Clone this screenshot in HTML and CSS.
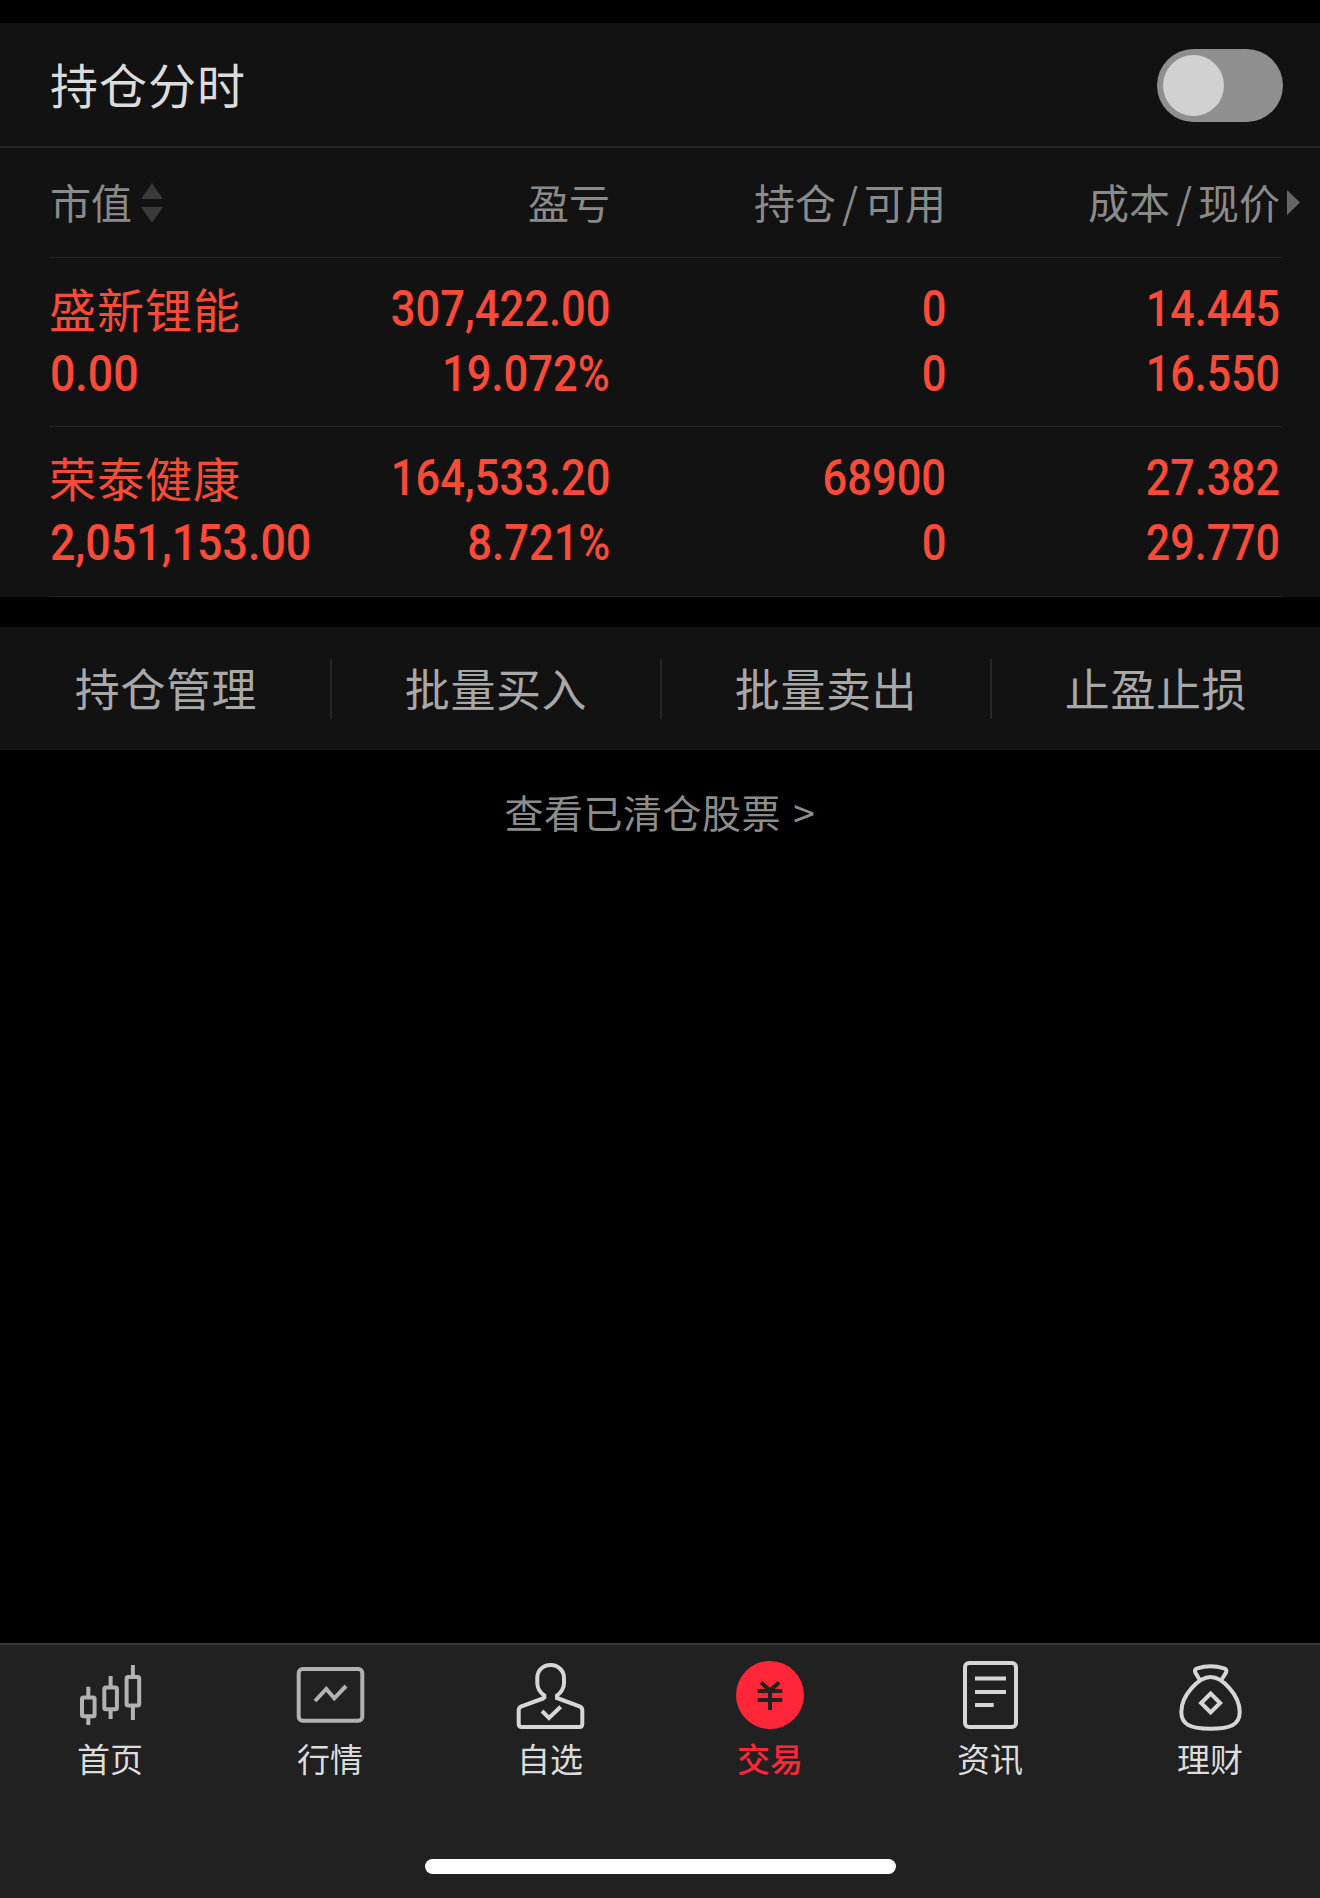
FILE: index.html
```html
<!DOCTYPE html>
<html lang="zh-CN">
<head>
  <meta charset="UTF-8">
  <meta name="viewport" content="width=device-width, initial-scale=1.0">
  <title>交易</title>
  <link rel="stylesheet" href="styles.css">
</head>
<body>
  <main>
    <section class="panel">
      <div class="panel-title">
        <h1>持仓分时</h1>
        <div class="switch"><div class="knob"></div></div>
      </div>

      <div class="table">
        <div class="row head">
          <div class="cell">市值
            <svg class="sort" width="22" height="40" viewBox="0 0 22 40"><path d="M11 0L22 16H0ZM11 40L0 24H22Z"/></svg>
          </div>
          <div class="cell">盈亏</div>
          <div class="cell">持仓<i>/</i>可用</div>
          <div class="cell">成本<i>/</i>现价
            <svg class="more" width="13" height="25" viewBox="0 0 13 25"><path d="M0 0L13 12.5L0 25Z"/></svg>
          </div>
        </div>
        <div class="row">
          <div class="cell"><b class="name">盛新锂能</b><span>0.00</span></div>
          <div class="cell"><span>307,422.00</span><span>19.072%</span></div>
          <div class="cell"><span>0</span><span>0</span></div>
          <div class="cell"><span>14.445</span><span>16.550</span></div>
        </div>
        <div class="row">
          <div class="cell"><b class="name">荣泰健康</b><span>2,051,153.00</span></div>
          <div class="cell"><span>164,533.20</span><span>8.721%</span></div>
          <div class="cell"><span>68900</span><span>0</span></div>
          <div class="cell"><span>27.382</span><span>29.770</span></div>
        </div>
      </div>
    </section>

    <section class="actions">
      <div>持仓管理</div>
      <div>批量买入</div>
      <div>批量卖出</div>
      <div>止盈止损</div>
    </section>

    <a class="cleared">查看已清仓股票 &gt;</a>
  </main>

  <footer>
    <nav>
      <a class="tab dim">
        <svg viewBox="0 0 68 68">
          <rect x="6" y="36.6" width="12.6" height="18.6" rx="1.5"/>
          <rect x="28.3" y="26.6" width="12.6" height="21.6" rx="1.5"/>
          <rect x="50.6" y="16" width="12.6" height="28.4" rx="1.5"/>
          <path d="M12.3 25.7V36M12.3 56V64M34.6 15V26M34.6 49V58M56.9 4V15M56.9 45V59"/>
        </svg>
        首页
      </a>
      <a class="tab dim">
        <svg viewBox="0 0 68 68">
          <rect x="2.7" y="8" width="63.6" height="51.8" rx="4"/>
          <path d="M19 40L30.3 28L38.3 37.3L50 25"/>
        </svg>
        行情
      </a>
      <a class="tab">
        <svg viewBox="0 0 68 68">
          <path d="M28.3 38V34.5C24 31.5 21.5 28 21.3 22.5V17C21.3 9.5 27 4 34.6 4S48 9.5 48 17V22.5C47.8 28 45 31.5 41 34.5V37L63.5 45.3Q66.3 46.5 66.3 49V63Q66.3 66 63.3 66H5.7Q2.7 66 2.7 63V49Q2.7 46.5 5.5 45.3L28.3 37"/>
          <path d="M26 50L33 57L44.7 45.7"/>
        </svg>
        自选
      </a>
      <a class="tab active">
        <svg viewBox="0 0 68 68">
          <circle cx="34" cy="34" r="34"/>
          <path d="M25 21.5L34 29.5L43 21.5M21.7 30H46.3M21.7 39H46.3M34 29V49"/>
        </svg>
        交易
      </a>
      <a class="tab">
        <svg viewBox="0 0 68 68">
          <rect x="9" y="2" width="51" height="64" rx="4"/>
          <path d="M19 17.5H50M19 31H50M19 44H37.7"/>
        </svg>
        资讯
      </a>
      <a class="tab">
        <svg viewBox="0 0 68 68">
          <path d="M34.6 16C46 16 63.7 34 63.7 51C63.7 64 54 67.7 34.6 67.7S5.3 64 5.3 51C5.3 34 23 16 34.6 16Z"/>
          <path d="M23.5 18.5L19.3 11.5Q18 8.5 21.3 7.3Q34.6 3 48 7.3Q51.3 8.5 50 11.5L45.7 18.5"/>
          <path d="M34.6 32.5L44.1 42L34.6 51.5L25.1 42Z"/>
        </svg>
        理财
      </a>
    </nav>
    <div class="home-bar"></div>
  </footer>
</body>
</html>
```

FILE: styles.css
```css
* {
  box-sizing: border-box;
}

body {
  margin: 0;
  height: 1898px;
  padding-top: 23px;
  display: flex;
  flex-direction: column;
  background: #000;
  font-family: "Noto Sans CJK SC", sans-serif;
  font-weight: 400;
}

main {
  flex: 1;
}

.panel,
.actions {
  background: #121212;
}

.panel-title {
  display: flex;
  justify-content: space-between;
  align-items: flex-start;
  height: 125px;
  padding: 26px 37px 0 50px;
  border-bottom: 2px solid #272727;
}

h1 {
  margin: 0;
  font-size: 48px;
  font-weight: 400;
  letter-spacing: 1px;
  line-height: 68px;
  color: #dcdcdc;
}

.switch {
  width: 126px;
  height: 73px;
  padding: 6px;
  border-radius: 37px;
  background: #8f8f8f;
}

.knob {
  width: 61px;
  height: 61px;
  border-radius: 50%;
  background: #d1d1d1;
}

.table {
  padding: 0 37px 0 49px;
}

.row {
  display: grid;
  grid-template-columns: 226px 335px 336px 334px;
  height: 169px;
  padding: 18px 3px 0 0;
  border-bottom: 1px solid #242424;
  color: #fa4a38;
}

.row + .row {
  height: 170px;
}

.row.head + .row {
  height: 169px;
}

.cell {
  display: flex;
  flex-direction: column;
  align-items: flex-end;
}

.cell:first-child {
  align-items: flex-start;
}

.cell span {
  font-family: Roboto, sans-serif;
  font-size: 50px;
  font-weight: 500;
  line-height: 65px;
  padding-top: 1px;
  margin-bottom: -1px;
  white-space: nowrap;
  transform: scaleX(0.87);
  transform-origin: right;
}

.cell:first-child span {
  padding-left: 1px;
  transform: scaleX(0.895);
  transform-origin: left;
}

.cell:last-child span {
  transform: scaleX(0.86);
}

.name {
  font-size: 47px;
  font-weight: 400;
  letter-spacing: 1px;
  line-height: 63px;
  margin-bottom: 2px;
}

.row.head {
  height: 110px;
  padding-top: 0;
  color: #8a8a8a;
  font-size: 41px;
}

.head .cell {
  position: relative;
  flex-direction: row;
  align-items: center;
  justify-content: flex-end;
  padding-bottom: 3px;
}

.head .cell:first-child {
  justify-content: flex-start;
  padding-left: 1px;
}

.head i {
  font-style: normal;
  padding: 0 6px;
}

.sort {
  margin-left: 9px;
  margin-top: 3px;
  fill: #3a3a3a;
}

/* sits in the right gutter, outside the column */
.more {
  position: absolute;
  right: -20px;
  margin-top: 3px;
  fill: #666;
}

.actions {
  display: flex;
  align-items: center;
  height: 123px;
  margin-top: 30px;
}

.actions div {
  flex: 1;
  height: 60px;
  line-height: 58px;
  text-align: center;
  font-size: 45px;
  letter-spacing: 0.6px;
  color: #a8a8a8;
}

.actions div:first-child {
  padding-left: 2px;
}

.actions div + div {
  border-left: 2px solid #262626;
}

.cleared {
  display: block;
  margin-top: 31px;
  line-height: 60px;
  text-align: center;
  font-size: 39px;
  letter-spacing: 0.5px;
  word-spacing: 3px;
  color: #8c8c8c;
}

footer {
  height: 255px;
  border-top: 2px solid #373737;
  background: #212121;
}

nav {
  display: flex;
  padding-top: 16px;
}

.tab {
  flex: 1;
  display: flex;
  flex-direction: column;
  align-items: center;
  font-size: 33px;
  line-height: 48px;
  color: #dcdcdc;
}

.tab svg {
  width: 68px;
  height: 68px;
  margin-bottom: 5px;
  overflow: visible;
  fill: none;
  stroke: #d6d6d6;
  stroke-width: 4;
}

.tab.dim svg {
  stroke: #b2b2b2;
}

.tab.active {
  color: #ff2637;
  font-weight: 500;
}

.tab.active svg {
  stroke: #212121;
}

.tab.active circle {
  fill: #ff2637;
  stroke: none;
}

.home-bar {
  width: 471px;
  height: 15px;
  margin: 77px auto 0;
  border-radius: 8px;
  background: #fff;
}
```
